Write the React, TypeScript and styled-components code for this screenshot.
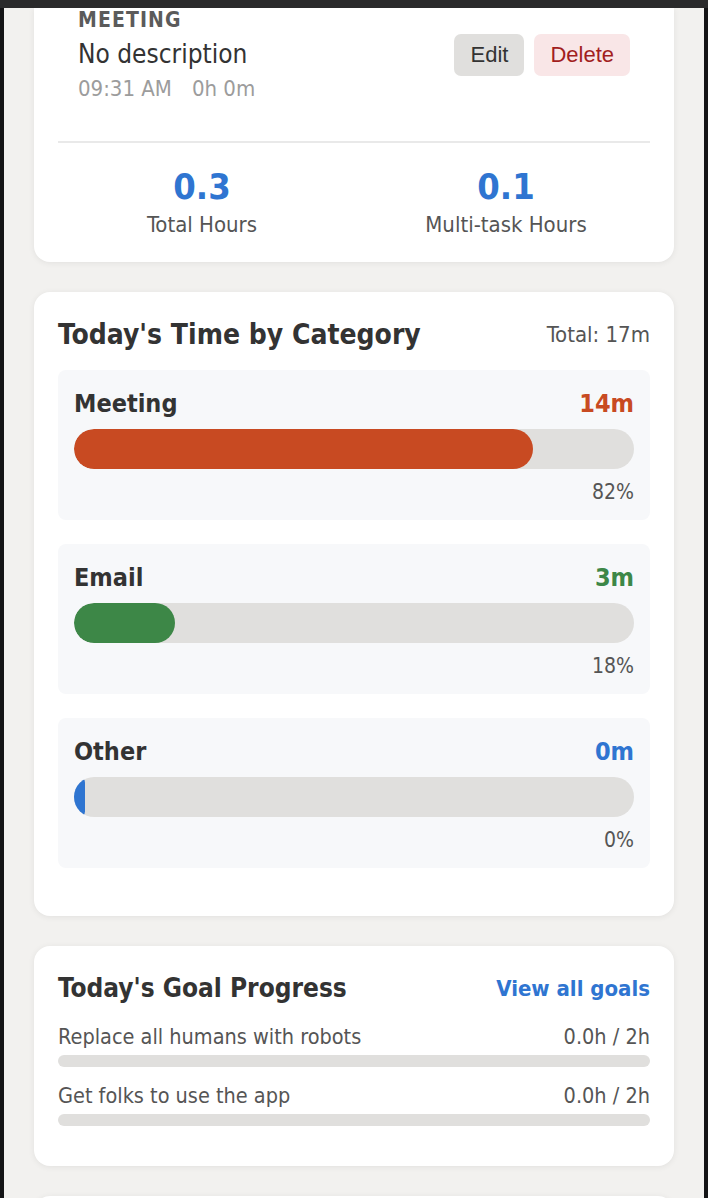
import React from "react";
import styled, { createGlobalStyle } from "styled-components";

const GlobalStyle = createGlobalStyle`
  html, body {
    margin: 0;
    padding: 0;
    background: #141416;
  }
  body {
    font-family: "DejaVu Sans Condensed", "DejaVu Sans", sans-serif;
    font-stretch: condensed;
    color: #333;
  }
  * {
    box-sizing: border-box;
  }
`;

const Frame = styled.div`
  height: 1198px;
  overflow: hidden;
  border-top: 8px solid #2a2a2b;
  padding: 0 4px;
`;

const Panel = styled.div`
  height: 100%;
  overflow: hidden;
  background: #f2f1ef;
  padding: 0 30px;
`;

const Card = styled.section<{ $cut?: boolean }>`
  background: #fff;
  border-radius: ${(p) => (p.$cut ? "0 0 16px 16px" : "16px")};
  box-shadow: 0 1px 6px rgba(0, 0, 0, 0.07);
  padding: ${(p) => (p.$cut ? "0 24px 24px" : "24px")};
  margin-bottom: 30px;
`;

/* entry */
const Entry = styled.div`
  display: flex;
  align-items: center;
  justify-content: space-between;
  padding: 0 20px 20px;
  margin-bottom: 20px;
`;

const EntryCategory = styled.div`
  font-size: 21px;
  line-height: 25px;
  font-weight: bold;
  letter-spacing: 1.1px;
  color: #5b5b5b;
  text-transform: uppercase;
`;

const EntryDesc = styled.div`
  font-size: 26px;
  line-height: 31px;
  margin-top: 6px;
  color: #333;
`;

const EntryMeta = styled.div`
  font-size: 22px;
  line-height: 25px;
  margin-top: 6px;
  color: #9c9c9c;
  span + span {
    margin-left: 20px;
  }
`;

const Actions = styled.div`
  display: flex;
  gap: 10px;
`;

const Button = styled.button<{ $danger?: boolean }>`
  height: 42px;
  padding: 0 16px;
  border: none;
  border-radius: 7px;
  font-family: "Liberation Sans", Arial, sans-serif;
  font-size: 22px;
  background: ${(p) => (p.$danger ? "#f9e6e7" : "#e0dfdd")};
  color: ${(p) => (p.$danger ? "#a21e1e" : "#333")};
`;

/* stats */
const Stats = styled.div`
  display: grid;
  grid-template-columns: 1fr 1fr;
  gap: 16px;
  border-top: 2px solid #e9e9e9;
  padding-top: 22px;
  text-align: center;
`;

const StatValue = styled.div`
  font-size: 36px;
  line-height: 43px;
  font-weight: bold;
  color: #2f75d1;
`;

const StatLabel = styled.div`
  font-size: 22px;
  line-height: 26px;
  margin-top: 4px;
  color: #555;
`;

/* sections */
const SectionHeader = styled.div`
  display: flex;
  align-items: center;
  justify-content: space-between;
  height: 36px;
  margin-bottom: 18px;
`;

const SectionTitle = styled.h2<{ $size?: number }>`
  margin: 0;
  font-size: ${(p) => p.$size ?? 28}px;
  font-weight: bold;
  color: #333;
`;

const SectionAside = styled.span`
  font-size: 22px;
  color: #555;
`;

const SectionLink = styled.a`
  font-size: 22px;
  font-weight: bold;
  color: #2f75d1;
  text-decoration: none;
`;

const CategoryItem = styled.div`
  background: #f7f8fa;
  border-radius: 8px;
  padding: 19px 16px 15px;
  margin-bottom: 24px;
`;

const CategoryRow = styled.div`
  display: flex;
  justify-content: space-between;
  font-size: 25px;
  line-height: 30px;
  font-weight: bold;
`;

const CategoryValue = styled.span<{ $color: string }>`
  color: ${(p) => p.$color};
`;

const Track = styled.div<{ $height: number }>`
  height: ${(p) => p.$height}px;
  border-radius: ${(p) => p.$height / 2}px;
  background: #e0dfdd;
  overflow: hidden;
`;

const BigTrack = styled(Track)`
  margin-top: 10px;
`;

const Fill = styled.div<{ $color: string }>`
  height: 100%;
  border-radius: 20px;
  background: ${(p) => p.$color};
`;

const Percent = styled.div`
  margin-top: 10px;
  text-align: right;
  font-size: 21px;
  line-height: 26px;
  color: #555;
`;

const GoalItem = styled.div`
  margin-bottom: 16px;
`;

const GoalRow = styled.div`
  display: flex;
  justify-content: space-between;
  font-size: 21.5px;
  line-height: 26px;
  color: #555;
`;

const GoalTrack = styled(Track)`
  margin-top: 5px;
`;

const Spacer = styled.div`
  height: 160px;
`;

const categories = [
  { name: "Meeting", time: "14m", pct: 82, color: "#c84a22" },
  { name: "Email", time: "3m", pct: 18, color: "#3d8747" },
  { name: "Other", time: "0m", pct: 0, color: "#2f75d1" },
];

const goals = [
  { name: "Replace all humans with robots", progress: "0.0h / 2h" },
  { name: "Get folks to use the app", progress: "0.0h / 2h" },
];

export default function App() {
  return (
    <>
      <GlobalStyle />
      <Frame>
        <Panel>
          <Card $cut>
            <Entry>
              <div>
                <EntryCategory>Meeting</EntryCategory>
                <EntryDesc>No description</EntryDesc>
                <EntryMeta>
                  <span>09:31 AM</span>
                  <span>0h 0m</span>
                </EntryMeta>
              </div>
              <Actions>
                <Button>Edit</Button>
                <Button $danger>Delete</Button>
              </Actions>
            </Entry>
            <Stats>
              <div>
                <StatValue>0.3</StatValue>
                <StatLabel>Total Hours</StatLabel>
              </div>
              <div>
                <StatValue>0.1</StatValue>
                <StatLabel>Multi-task Hours</StatLabel>
              </div>
            </Stats>
          </Card>

          <Card>
            <SectionHeader>
              <SectionTitle>Today's Time by Category</SectionTitle>
              <SectionAside>Total: 17m</SectionAside>
            </SectionHeader>
            {categories.map((c) => (
              <CategoryItem key={c.name}>
                <CategoryRow>
                  <span>{c.name}</span>
                  <CategoryValue $color={c.color}>{c.time}</CategoryValue>
                </CategoryRow>
                <BigTrack $height={40}>
                  <Fill $color={c.color} style={{ width: `${Math.max(c.pct, 2)}%` }} />
                </BigTrack>
                <Percent>{c.pct}%</Percent>
              </CategoryItem>
            ))}
          </Card>

          <Card>
            <SectionHeader>
              <SectionTitle $size={26}>Today's Goal Progress</SectionTitle>
              <SectionLink href="#">View all goals</SectionLink>
            </SectionHeader>
            {goals.map((g) => (
              <GoalItem key={g.name}>
                <GoalRow>
                  <span>{g.name}</span>
                  <span>{g.progress}</span>
                </GoalRow>
                <GoalTrack $height={12} />
              </GoalItem>
            ))}
          </Card>

          <Card>
            <Spacer />
          </Card>
        </Panel>
      </Frame>
    </>
  );
}
